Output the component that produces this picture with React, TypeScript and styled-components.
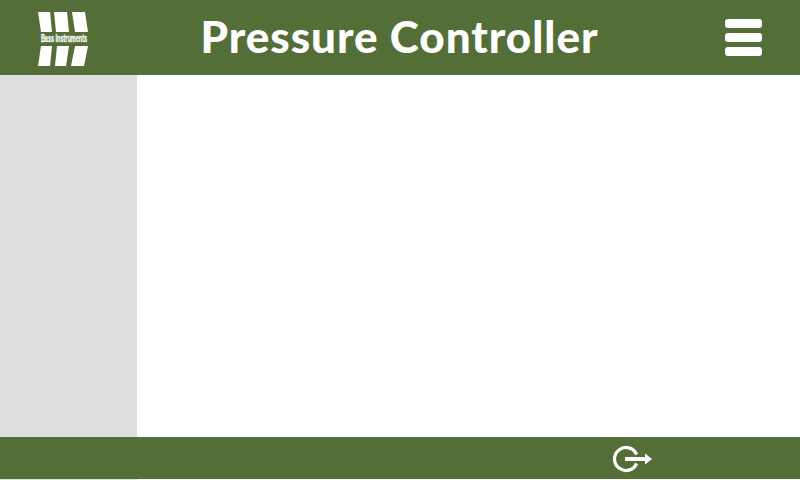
import React from "react";
import styled, { createGlobalStyle } from "styled-components";

const Global = createGlobalStyle`
  html, body { margin: 0; padding: 0; background: #fff; }
  #root { width: 800px; height: 480px; overflow: hidden; }
`;

const Shell = styled.div`
  display: grid;
  grid-template-columns: 137px 1fr;
  grid-template-rows: 75px 362px 42px 1px;
  width: 800px;
  height: 480px;
  background: #fff;
`;

const Header = styled.header`
  grid-column: 1 / 3;
  display: flex;
  align-items: center;
  background: #546e37;
  padding-left: 38px;
  padding-right: 38px;
`;

const Logo = styled.div`
  width: 50px;
  height: 54px;
  flex: none;
  margin-top: 3px;
  display: flex;
  flex-direction: column;
  align-items: center;
  justify-content: space-between;
`;

const LogoRow = styled.svg`
  display: block;
  width: 50px;
  height: 20px;
`;

const LogoText = styled.div`
  font: 700 10px/10px "Liberation Sans", sans-serif;
  color: #fff;
  white-space: nowrap;
  -webkit-text-stroke: 0.3px #fff;
  transform: translateX(1px) scaleX(0.55);
`;

const Title = styled.h1`
  flex: 1;
  margin: 0 0 4px;
  padding-right: 14px;
  text-align: center;
  font: 900 44px/1 "Lato", sans-serif;
  letter-spacing: 0.95px;
  color: #fff;
`;

const Burger = styled.button`
  display: flex;
  flex-direction: column;
  gap: 5px;
  flex: none;
  width: 37px;
  padding: 0;
  border: 0;
  background: none;
`;

const BurgerBar = styled.span`
  display: block;
  height: 9px;
  border-radius: 3px;
  background: #fff;
`;

const Sidebar = styled.aside`
  background: #dedede;
`;

const Content = styled.main`
  background: #fff;
`;

const Footer = styled.footer`
  grid-column: 1 / 3;
  display: flex;
  align-items: center;
  background: #546e37;
  padding-left: 612px;
`;

const ExitButton = styled.svg`
  display: block;
  width: 42px;
  height: 32px;
  margin-top: 2px;
`;

const SideEnd = styled.div`
  background: #dedede;
`;

const ContentEnd = styled.div`
  background: #fff;
`;

export default function App() {
  return (
    <>
      <Global />
      <Shell>
        <Header>
          <Logo>
            <LogoRow viewBox="0 0 50 20">
              <polygon fill="#fff" points="0,0 12,0 14,20 3,20" />
              <polygon fill="#fff" points="16,0 29,0 31,20 18,20" />
              <polygon fill="#fff" points="34,0 47,0 50,20 37,20" />
            </LogoRow>
            <LogoText>Bass Instruments</LogoText>
            <LogoRow viewBox="0 0 50 20">
              <polygon fill="#fff" points="3,0 14,0 12,20 0,20" />
              <polygon fill="#fff" points="19,0 31,0 28,20 17,20" />
              <polygon fill="#fff" points="37,0 50,0 46,20 33,20" />
            </LogoRow>
          </Logo>
          <Title>Pressure Controller</Title>
          <Burger aria-label="Menu">
            <BurgerBar />
            <BurgerBar />
            <BurgerBar />
          </Burger>
        </Header>
        <Sidebar />
        <Content />
        <Footer>
          <ExitButton viewBox="0 0 42 32">
            <path
              d="M24.6 11.5A11.5 11.5 0 1 0 24.6 20.5"
              fill="none"
              stroke="#fff"
              strokeWidth="3.2"
            />
            <rect x="13" y="14" width="21" height="4" fill="#fff" />
            <polygon points="33,10.5 40,16 33,21.5" fill="#fff" />
          </ExitButton>
        </Footer>
        <SideEnd />
        <ContentEnd />
      </Shell>
    </>
  );
}
